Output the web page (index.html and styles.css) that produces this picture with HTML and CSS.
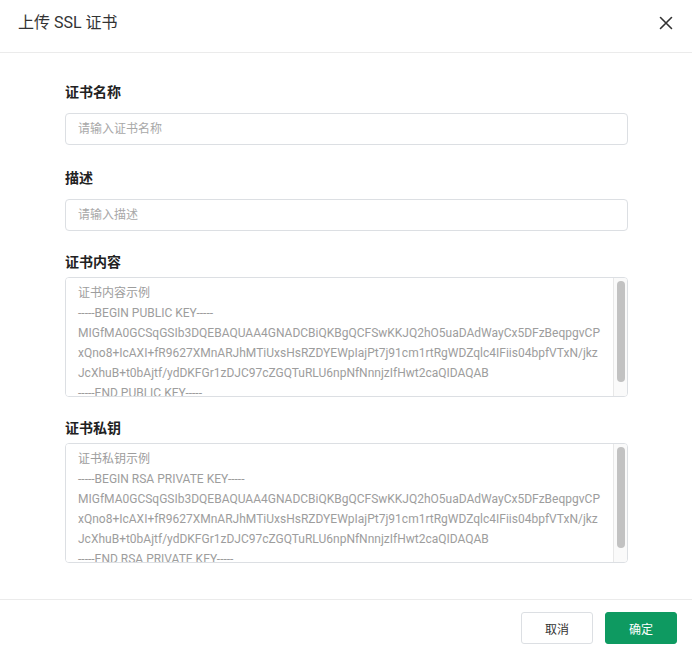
FILE: index.html
```html
<!DOCTYPE html>
<html lang="zh-CN">
<head>
    <meta charset="UTF-8">
    <meta name="viewport" content="width=device-width, initial-scale=1.0">
    <title>上传 SSL 证书</title>
    <link rel="stylesheet" href="styles.css">
</head>
<body>
    <div class="dialog">
        <div class="dialog-header">
            <span class="dialog-title">上传 SSL 证书</span>
            <button class="close-btn" aria-label="关闭">
                <svg width="14" height="14" viewBox="0 0 14 14">
                    <path d="M1.5 1.5 L12.5 12.5 M12.5 1.5 L1.5 12.5" stroke="#333" stroke-width="1.6" stroke-linecap="round" fill="none"/>
                </svg>
            </button>
        </div>

        <div class="dialog-body">
            <div class="form-item first">
                <label class="form-label">证书名称</label>
                <input class="form-input" type="text" placeholder="请输入证书名称">
            </div>
            <div class="form-item">
                <label class="form-label">描述</label>
                <input class="form-input" type="text" placeholder="请输入描述">
            </div>
            <div class="form-item">
                <label class="form-label tight">证书内容</label>
                <div class="textarea-box">
                    <textarea class="form-textarea">证书内容示例
-----BEGIN PUBLIC KEY-----
MIGfMA0GCSqGSIb3DQEBAQUAA4GNADCBiQKBgQCFSwKKJQ2hO5uaDAdWayCx5DFzBeqpgvCP
xQno8+IcAXI+fR9627XMnARJhMTiUxsHsRZDYEWpIajPt7j91cm1rtRgWDZqlc4IFiis04bpfVTxN/jkz
JcXhuB+t0bAjtf/ydDKFGr1zDJC97cZGQTuRLU6npNfNnnjzIfHwt2caQIDAQAB
-----END PUBLIC KEY-----</textarea>
                    <div class="scrollbar"><div class="scrollbar-thumb"></div></div>
                </div>
            </div>
            <div class="form-item last">
                <label class="form-label tight">证书私钥</label>
                <div class="textarea-box">
                    <textarea class="form-textarea">证书私钥示例
-----BEGIN RSA PRIVATE KEY-----
MIGfMA0GCSqGSIb3DQEBAQUAA4GNADCBiQKBgQCFSwKKJQ2hO5uaDAdWayCx5DFzBeqpgvCP
xQno8+IcAXI+fR9627XMnARJhMTiUxsHsRZDYEWpIajPt7j91cm1rtRgWDZqlc4IFiis04bpfVTxN/jkz
JcXhuB+t0bAjtf/ydDKFGr1zDJC97cZGQTuRLU6npNfNnnjzIfHwt2caQIDAQAB
-----END RSA PRIVATE KEY-----</textarea>
                    <div class="scrollbar"><div class="scrollbar-thumb"></div></div>
                </div>
            </div>
        </div>

        <div class="dialog-footer">
            <button class="btn btn-default">取消</button>
            <button class="btn btn-primary">确定</button>
        </div>
    </div>
</body>
</html>
```

FILE: styles.css
```css
body {
    margin: 0;
    background-color: #fff;
    color: #333;
    font-family: Roboto, "Noto Sans CJK SC", sans-serif;
}

.dialog {
    width: 692px;
    background-color: #fff;
}

.dialog-header {
    display: flex;
    justify-content: space-between;
    align-items: center;
    height: 22px;
    padding: 12px 19px 18px 18px;
    border-bottom: 1px solid #ebebeb;
}

.dialog-title {
    font-size: 16px;
    line-height: 22px;
    color: #333;
}

.close-btn {
    display: flex;
    padding: 0;
    border: none;
    background: none;
    cursor: pointer;
}

.dialog-body {
    padding: 28px 64px 36px 65px;
}

.form-item {
    margin-bottom: 20px;
}

.form-item.first {
    margin-bottom: 22px;
}

.form-item.last {
    margin-bottom: 0;
}

.form-label {
    display: block;
    font-size: 14px;
    font-weight: bold;
    line-height: 22px;
    color: #222;
    margin-bottom: 10px;
}

.form-label.tight {
    margin-bottom: 4px;
}

.form-input {
    display: block;
    box-sizing: border-box;
    width: 100%;
    height: 32px;
    padding: 0 12px;
    border: 1px solid #dcdfe3;
    border-radius: 4px;
    font-family: Roboto, "Noto Sans CJK SC", sans-serif;
    font-size: 12px;
    color: #333;
    outline: none;
}

.form-input::placeholder {
    color: #a8a8a8;
}

.textarea-box {
    display: flex;
    box-sizing: border-box;
    height: 120px;
    border: 1px solid #dcdfe3;
    border-radius: 4px;
    overflow: hidden;
}

.form-textarea {
    flex: 1;
    min-width: 0;
    margin: 0;
    padding: 5px 0 5px 12px;
    border: none;
    font-family: Roboto, "Noto Sans CJK SC", sans-serif;
    font-size: 12px;
    line-height: 20px;
    color: #9d9d9d;
    white-space: pre;
    overflow: hidden;
    resize: none;
    outline: none;
}

.scrollbar {
    width: 14px;
    box-sizing: border-box;
    padding: 3px 2px 0 3px;
    background-color: #fafafa;
    border-left: 1px solid #e8e8e8;
}

.scrollbar-thumb {
    height: 101px;
    background-color: #c2c2c2;
    border-radius: 4px;
}

.dialog-footer {
    display: flex;
    justify-content: flex-end;
    gap: 12px;
    padding: 12px 15px 12px 0;
    border-top: 1px solid #ebebeb;
}

.btn {
    width: 72px;
    height: 32px;
    border-radius: 3px;
    font-family: Roboto, "Noto Sans CJK SC", sans-serif;
    font-size: 12px;
    cursor: pointer;
}

.btn-default {
    background-color: #fff;
    border: 1px solid #dcdfe3;
    color: #333;
}

.btn-primary {
    background-color: #0e9a61;
    border: 1px solid #0e9a61;
    color: #fff;
}
```
